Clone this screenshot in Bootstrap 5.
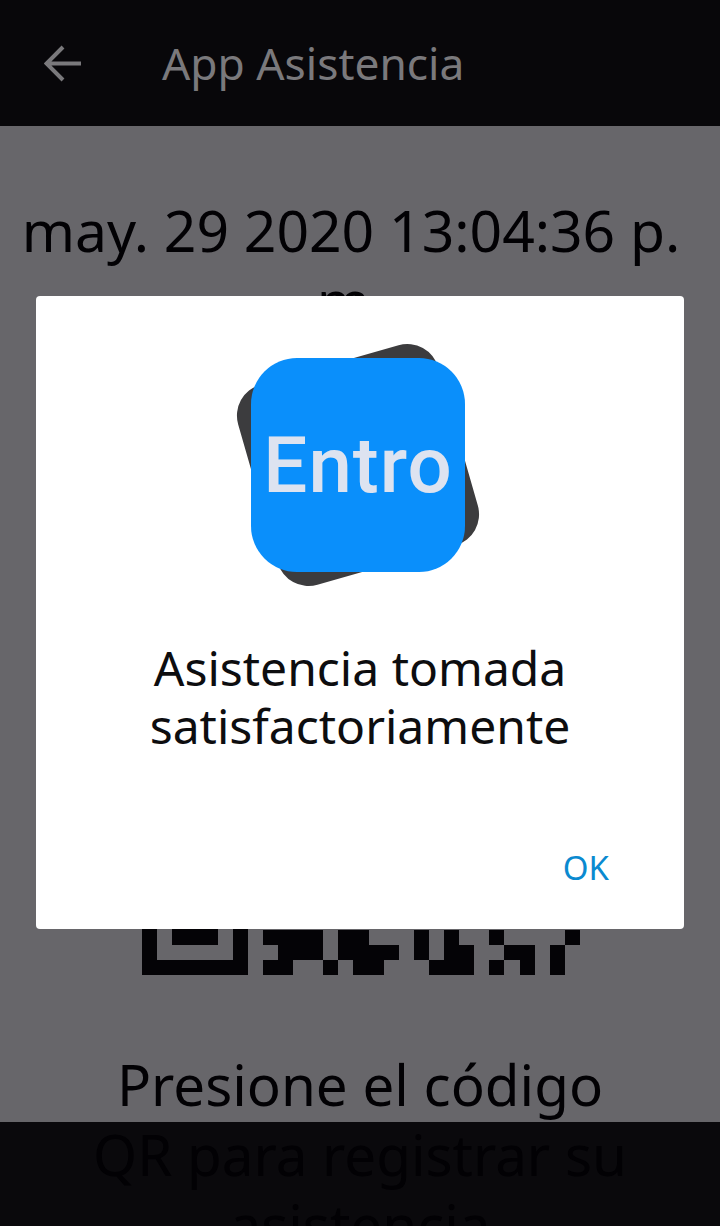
<!DOCTYPE html>
<html lang="es">
<head>
    <meta charset="UTF-8">
    <meta name="viewport" content="width=device-width, initial-scale=1.0">
    <title>App Asistencia</title>
    <link href="https://cdn.jsdelivr.net/npm/bootstrap@5.3.2/dist/css/bootstrap.min.css" rel="stylesheet">
    <style>
        html, body { height: 100%; }
        body {
            font-family: "Noto Sans", sans-serif;
            background: #67666a;
            overflow: hidden;
        }
        .screen { height: 1226px; overflow: hidden; }
        .app-bar {
            height: 126px;
            background: #08070a;
            color: #7a797c;
            padding-left: 44px;
            gap: 81px;
        }
        .app-title { font-size: 44.3px; line-height: 1; }
        .big-line {
            font-size: 57px;
            line-height: 70px;
            color: #020104;
            text-align: center;
            margin: 0;
        }
        .date-line { padding: 69px 29px 0 11px; }
        .qr-code { display: block; width: 438px; height: 438px; margin: 202px 0 0 142px; }
        .hint-line { font-size: 56.5px; padding: 75px 10px 0; position: relative; }
        .bottom-bar {
            position: absolute;
            left: 0; right: 0; bottom: 0;
            height: 104px;
            background: #0a090c;
        }
        .dialog-box {
            position: absolute;
            left: 36px; top: 296px;
            width: 648px; height: 633px;
            border: 0;
            border-radius: 4px;
            background: #fff;
        }
        .logo-box { position: relative; width: 214px; height: 214px; margin: 62px 0 0 215px; }
        .logo-back {
            position: absolute;
            left: 3px; top: 3px;
            width: 208px; height: 208px;
            border-radius: 32px;
            background: #3c3c3e;
            transform: rotate(-16deg);
        }
        .logo-front {
            position: absolute;
            inset: 0;
            border-radius: 46px;
            background: #0a8ffb;
            color: #dde3f0;
            font-family: Roboto, sans-serif;
            font-weight: 500;
            font-size: 78px;
            letter-spacing: 1px;
        }
        .dialog-msg {
            font-size: 48px;
            line-height: 58px;
            color: #0d0d0f;
            text-align: center;
            margin: 67px 0 0;
        }
        .dialog-ok {
            font-size: 33px;
            line-height: 1;
            color: #0a8ad0;
            text-decoration: none;
            position: absolute;
            right: 75px; bottom: 45px;
        }
    </style>
</head>
<body>
    <div class="screen position-relative">
        <div class="bottom-bar"></div>

        <header class="app-bar d-flex align-items-center position-relative">
            <svg width="37" height="37" viewBox="0 0 37 37" fill="none" stroke="#7a797c" stroke-width="4">
                <path d="M37 18.5H3M19 2L2.5 18.5L19 35"/>
            </svg>
            <span class="app-title">App Asistencia</span>
        </header>

        <p class="big-line date-line position-relative">may. 29 2020 13:04:36 p. m.</p>

        <svg class="qr-code position-relative" viewBox="0 0 29 29" shape-rendering="crispEdges" fill="#040306">
            <!-- finders -->
            <path fill-rule="evenodd" d="M0 0h7v7h-7zM1 1v5h5v-5zM22 0h7v7h-7zM23 1v5h5v-5zM0 22h7v7h-7zM1 23v5h5v-5z"/>
            <path d="M2 2h3v3h-3zM24 2h3v3h-3zM2 24h3v3h-3z"/>
            <!-- last three rows, the only ones the dialog leaves visible -->
            <path d="M8 26h4v1h-4zM13 26h2v1h-2zM18 26h1v1h-1zM20 26h1v1h-1zM23 26h1v1h-1zM28 26h1v1h-1z"/>
            <path d="M9 27h3v1h-3zM13 27h4v1h-4zM18 27h1v1h-1zM20 27h2v1h-2zM24 27h2v1h-2zM27 27h1v1h-1z"/>
            <path d="M8 28h2v1h-2zM12 28h1v1h-1zM14 28h2v1h-2zM19 28h3v1h-3zM23 28h1v1h-1zM25 28h1v1h-1zM27 28h1v1h-1z"/>
        </svg>

        <p class="big-line hint-line">Presione el código<br>QR para registrar su<br>asistencia</p>

        <div class="card dialog-box">
            <div class="logo-box">
                <div class="logo-back"></div>
                <div class="logo-front d-flex align-items-center justify-content-center">Entro</div>
            </div>
            <p class="dialog-msg">Asistencia tomada<br>satisfactoriamente</p>
            <a class="dialog-ok" href="#">OK</a>
        </div>
    </div>
    <script src="https://cdn.jsdelivr.net/npm/bootstrap@5.3.2/dist/js/bootstrap.bundle.min.js"></script>
</body>
</html>
